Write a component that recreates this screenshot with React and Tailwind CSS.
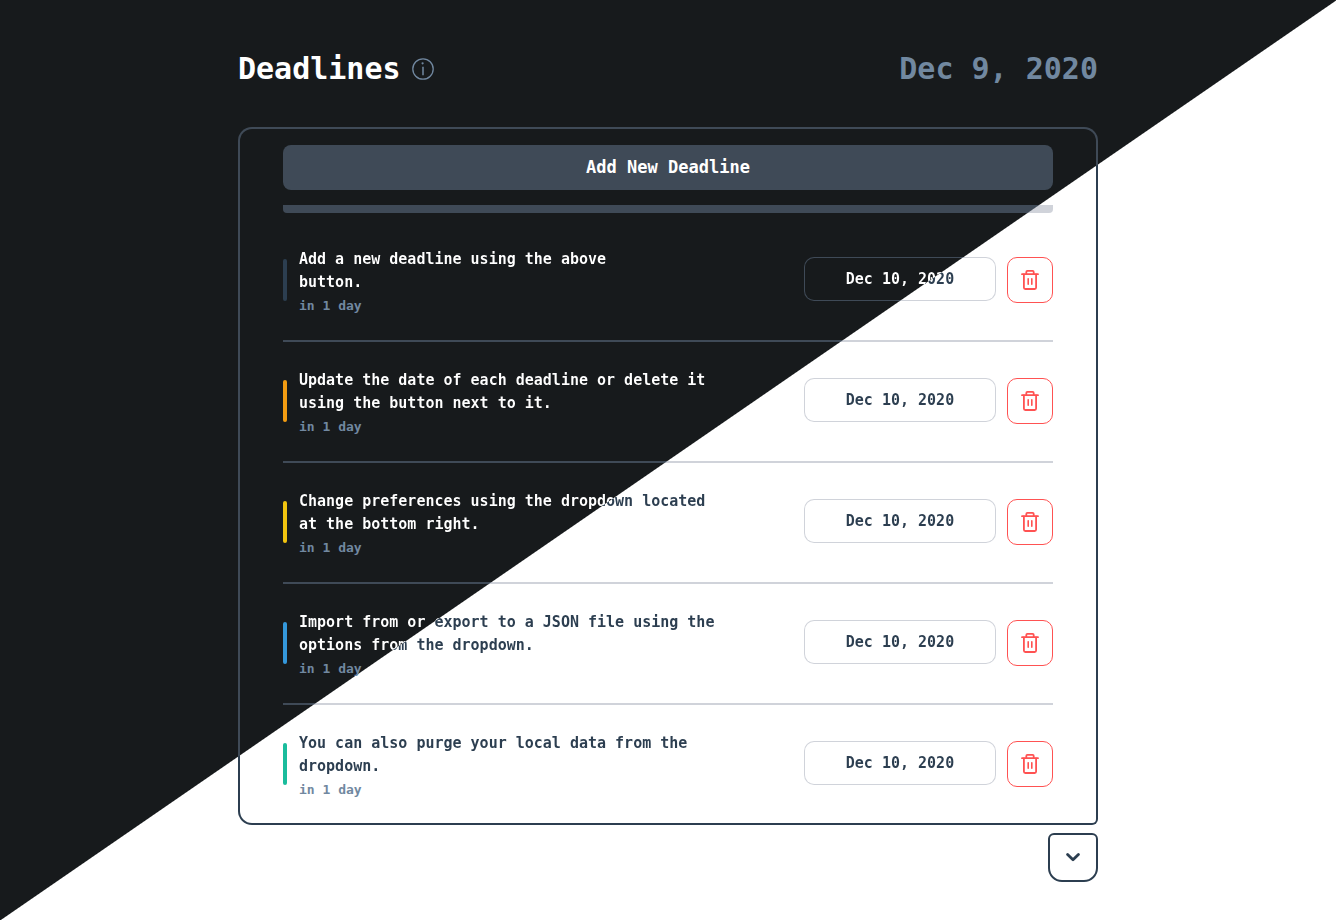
const SPLIT_PAGE =
  "bg-fixed bg-[linear-gradient(to_bottom_right,#171a1c_50%,#ffffff_calc(50%_+_1px))]";
const SPLIT_RULE =
  "bg-fixed bg-[linear-gradient(to_bottom_right,#3f4a57_50%,#d0d3da_calc(50%_+_1px))]";
const SPLIT_TEXT =
  "bg-fixed bg-clip-text text-transparent bg-[linear-gradient(to_bottom_right,#ffffff_50%,#2c3e50_calc(50%_+_1px))]";
const SPLIT_FRAME =
  "bg-fixed bg-[linear-gradient(to_bottom_right,#3f4a57_50%,#2c3e50_calc(50%_+_1px))]";

const deadlines = [
  { color: "bg-[#2c3e50]", title: "Add a new deadline using the above\nbutton." },
  { color: "bg-[#f39c12]", title: "Update the date of each deadline or delete it\nusing the button next to it." },
  { color: "bg-[#f1c40f]", title: "Change preferences using the dropdown located\nat the bottom right." },
  { color: "bg-[#3498db]", title: "Import from or export to a JSON file using the\noptions from the dropdown." },
  { color: "bg-[#1abc9c]", title: "You can also purge your local data from the\ndropdown." },
];

function InfoIcon() {
  return (
    <svg width="22" height="22" viewBox="0 0 22 22" fill="none" stroke="currentColor" aria-hidden="true">
      <circle cx="11" cy="11" r="10.2" strokeWidth="1.3" />
      <path d="M10.2 9.4h.8v7.8" strokeWidth="1.5" />
      <circle cx="10.6" cy="5.3" r="1.1" fill="currentColor" stroke="none" />
    </svg>
  );
}

function TrashIcon() {
  return (
    <svg width="18" height="20" viewBox="0 0 18 20" fill="none" stroke="currentColor" strokeWidth="1.8" strokeLinecap="round" strokeLinejoin="round" aria-hidden="true">
      <path d="M1 4.2h16M5.3 4V2A1.1 1.1 0 0 1 6.4.9h5.2A1.1 1.1 0 0 1 12.7 2v2" />
      <path d="M2.9 4.4v13.2A1.4 1.4 0 0 0 4.3 19h9.4a1.4 1.4 0 0 0 1.4-1.4V4.4" />
      <path d="M7.2 8.7v5.6M10.8 8.7v5.6" strokeWidth="1.6" />
    </svg>
  );
}

function DeadlineRow({ color, title }) {
  return (
    <li className="group">
      <div className="flex items-center pt-[23px] pb-6 group-last:pb-[23px]">
        <span className={"h-[42px] w-1 shrink-0 rounded-sm " + color} />
        <div className="ml-3 min-w-0 flex-1 pt-1 pb-px">
          <p className={"whitespace-pre-line text-[15px] leading-[23px] font-bold " + SPLIT_TEXT}>{title}</p>
          <p className="mt-0.5 text-[13px] leading-[19px] font-bold text-[#7188a0]">in 1 day</p>
        </div>
        <div className="flex shrink-0 items-start gap-[11px]">
          <div className={"rounded-[10px] p-px " + SPLIT_RULE}>
            <button type="button" className={"block h-[42px] w-[190px] rounded-[9px] " + SPLIT_PAGE}>
              <span className={"text-[15px] font-bold " + SPLIT_TEXT}>Dec 10, 2020</span>
            </button>
          </div>
          <button
            type="button"
            aria-label="Delete deadline"
            className="flex size-[46px] items-center justify-center rounded-[10px] border border-[#ff5252] text-[#ff5252]"
          >
            <TrashIcon />
          </button>
        </div>
      </div>
      <div className={"h-0.5 group-last:hidden " + SPLIT_RULE} />
    </li>
  );
}

export default function App() {
  return (
    <div className={"min-h-screen px-4 pt-[49px] pb-9 font-['DejaVu_Sans_Mono',monospace] " + SPLIT_PAGE}>
      <div className="mx-auto max-w-[860px]">
        <header className="flex items-center justify-between">
          <div className="flex items-center gap-[11px]">
            <h1 className="text-[30px] leading-10 font-bold text-white">Deadlines</h1>
            <button type="button" aria-label="About" className="text-[#7188a0]">
              <InfoIcon />
            </button>
          </div>
          <p className="text-[30px] leading-10 font-bold text-[#7188a0]">Dec 9, 2020</p>
        </header>

        <main className={"mt-[38px] rounded-[14px] rounded-br-md p-0.5 " + SPLIT_FRAME}>
          <div className={"rounded-xl rounded-br-sm px-[43px] pt-4 " + SPLIT_PAGE}>
            <button
              type="button"
              className="block h-[45px] w-full rounded-lg bg-[#3f4a57] text-[17px] font-bold text-white"
            >
              Add New Deadline
            </button>
            <div className={"mt-[15px] mb-2 h-2 rounded-b " + SPLIT_RULE} />
            <ul>
              {deadlines.map((item) => (
                <DeadlineRow key={item.title} {...item} />
              ))}
            </ul>
          </div>
        </main>

        <div className="mt-2 flex justify-end">
          <button
            type="button"
            aria-label="Preferences"
            className="flex h-[49px] w-[50px] items-center justify-center rounded-t-md rounded-b-[14px] border-2 border-[#2c3e50] text-[#2c3e50]"
          >
            <svg width="14" height="9" viewBox="0 0 14 9" fill="none" stroke="currentColor" strokeWidth="2.8" strokeLinecap="round" strokeLinejoin="round" aria-hidden="true">
              <path d="M1.6 1.5 7 6.8l5.4-5.3" />
            </svg>
          </button>
        </div>
      </div>
    </div>
  );
}
